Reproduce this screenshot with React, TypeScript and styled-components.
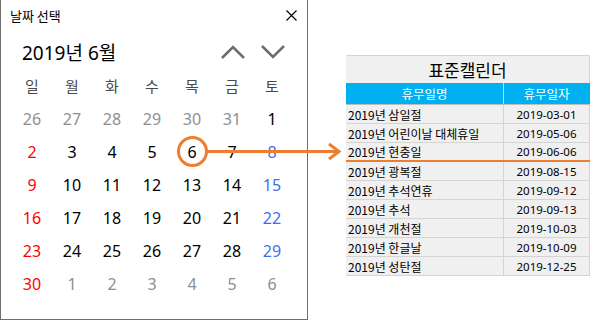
import React from 'react'
import styled, { createGlobalStyle } from 'styled-components'

const GlobalStyle = createGlobalStyle`
  html, body {
    margin: 0;
    padding: 0;
    background: #ffffff;
  }
  body {
    font-family: "Noto Sans", "Noto Sans CJK KR", sans-serif;
  }
`

const ORANGE = '#ed7d31'

const Page = styled.div`
  position: relative;
  width: 600px;
  height: 329px;
  display: flex;
  align-items: flex-start;
  overflow: hidden;
  background: #fff;
`

const Dialog = styled.div`
  width: 308px;
  height: 320px;
  box-sizing: border-box;
  border: 1px solid #6e6e6e;
  border-top: none;
  background: #fff;
  display: flex;
  flex-direction: column;
`

const TitleBar = styled.div`
  height: 31px;
  display: flex;
  align-items: center;
  justify-content: space-between;
  padding: 0 9px 0 9px;
  font-size: 13px;
  color: #000;
  font-family: "Noto Sans CJK KR", sans-serif;
`

const CloseButton = styled.span`
  display: flex;
  align-items: center;
  justify-content: center;
  width: 14px;
  height: 14px;
`

const MonthHeader = styled.div`
  height: 38px;
  display: flex;
  align-items: center;
  padding: 0 22px 0 21px;
  box-sizing: border-box;
`

const MonthLabel = styled.div`
  flex: 1;
  font-size: 19px;
  color: #000;
  font-family: "Noto Sans", "Noto Sans CJK KR", sans-serif;
  padding-top: 4px;
`

const NavButtons = styled.div`
  display: flex;
  gap: 16px;
  padding-top: 4px;
`

const DayGrid = styled.div`
  display: grid;
  grid-template-columns: repeat(7, 40px);
  grid-auto-rows: 33px;
  padding-left: 11px;
`

const WeekdayCell = styled.div`
  display: flex;
  align-items: center;
  justify-content: center;
  font-size: 15px;
  color: #4a4a4a;
  font-family: "Noto Sans CJK KR", sans-serif;
`

type Tone = 'other' | 'sun' | 'sat' | 'normal'

const toneColor: Record<Tone, string> = {
  other: '#8f8f8f',
  sun: '#ff0000',
  sat: '#3f6df5',
  normal: '#000000',
}

const DayCell = styled.div<{ $tone: Tone }>`
  display: flex;
  align-items: center;
  justify-content: center;
  font-size: 16px;
  color: ${(p) => toneColor[p.$tone]};
`

const Sheet = styled.div`
  margin-left: 38px;
  margin-top: 55px;
  width: 244px;
  display: flex;
  flex-direction: column;
  font-family: "Noto Sans CJK KR", sans-serif;
`

const SheetTitle = styled.div`
  height: 28px;
  box-sizing: border-box;
  border-top: 1px solid #d4d4d4;
  border-right: 1px solid #d4d4d4;
  background: #f0f0f0;
  display: flex;
  align-items: center;
  justify-content: center;
  font-size: 17px;
  color: #000;
`

const SheetRow = styled.div<{ $marked?: boolean }>`
  display: grid;
  grid-template-columns: 158px 86px;
  height: 19px;
  box-sizing: border-box;
  border-bottom: ${(p) => (p.$marked ? `2px solid ${ORANGE}` : '1px solid #d4d4d4')};
  background: #f0f0f0;
`

const HeadRow = styled(SheetRow)`
  height: 22px;
  background: #00b0f0;
  border-bottom: 1px solid #bdbdbd;
`

const HeadCell = styled.div<{ $last?: boolean }>`
  display: flex;
  align-items: center;
  justify-content: center;
  color: #fff;
  font-size: 12.5px;
  border-right: 1px solid ${(p) => (p.$last ? '#00b0f0' : '#d4d4d4')};
`

const NameCell = styled.div`
  display: flex;
  align-items: center;
  padding-left: 2px;
  font-size: 12px;
  color: #000;
  border-right: 1px solid #d4d4d4;
  white-space: nowrap;
`

const DateCell = styled.div`
  display: flex;
  align-items: center;
  justify-content: center;
  font-size: 11.5px;
  color: #000;
  font-family: "Noto Sans", sans-serif;
  border-right: 1px solid #d4d4d4;
`

const Annotation = styled.svg`
  position: absolute;
  left: 0;
  top: 0;
  pointer-events: none;
`

const weekdays = ['일', '월', '화', '수', '목', '금', '토']

const days: number[] = [
  26, 27, 28, 29, 30, 31, 1,
  2, 3, 4, 5, 6, 7, 8,
  9, 10, 11, 12, 13, 14, 15,
  16, 17, 18, 19, 20, 21, 22,
  23, 24, 25, 26, 27, 28, 29,
  30, 1, 2, 3, 4, 5, 6,
]

const holidays = [
  { name: '2019년 삼일절', date: '2019-03-01' },
  { name: '2019년 어린이날 대체휴일', date: '2019-05-06' },
  { name: '2019년 현충일', date: '2019-06-06' },
  { name: '2019년 광복절', date: '2019-08-15' },
  { name: '2019년 추석연휴', date: '2019-09-12' },
  { name: '2019년 추석', date: '2019-09-13' },
  { name: '2019년 개천절', date: '2019-10-03' },
  { name: '2019년 한글날', date: '2019-10-09' },
  { name: '2019년 성탄절', date: '2019-12-25' },
]

// the first row's Saturday (June 1) is shown plain black in the source picture
function toneFor(i: number): Tone {
  if (i < 6 || i > 35) return 'other'
  if (i === 6) return 'normal'
  if (i % 7 === 0) return 'sun'
  if (i % 7 === 6) return 'sat'
  return 'normal'
}

function Chevron({ up }: { up?: boolean }) {
  return (
    <svg width="24" height="14" viewBox="0 0 24 14">
      <polyline
        points={up ? '1,13 12,2 23,13' : '1,1 12,12 23,1'}
        fill="none"
        stroke="#6e6e6e"
        strokeWidth="2.6"
      />
    </svg>
  )
}

export default function App() {
  return (
    <Page>
      <GlobalStyle />
      <Dialog>
        <TitleBar>
          <span>날짜 선택</span>
          <CloseButton>
            <svg width="11" height="11" viewBox="0 0 11 11">
              <path d="M0.5 0.5 L10.5 10.5 M10.5 0.5 L0.5 10.5" stroke="#000" strokeWidth="1.2" />
            </svg>
          </CloseButton>
        </TitleBar>
        <MonthHeader>
          <MonthLabel>2019년 6월</MonthLabel>
          <NavButtons>
            <Chevron up />
            <Chevron />
          </NavButtons>
        </MonthHeader>
        <DayGrid>
          {weekdays.map((w) => (
            <WeekdayCell key={w}>{w}</WeekdayCell>
          ))}
          {days.map((d, i) => (
            <DayCell key={i} $tone={toneFor(i)}>
              {d}
            </DayCell>
          ))}
        </DayGrid>
      </Dialog>

      <Sheet>
        <SheetTitle>표준캘린더</SheetTitle>
        <HeadRow>
          <HeadCell>휴무일명</HeadCell>
          <HeadCell $last>휴무일자</HeadCell>
        </HeadRow>
        {holidays.map((h) => (
          <SheetRow key={h.date} $marked={h.date === '2019-06-06'}>
            <NameCell>{h.name}</NameCell>
            <DateCell>{h.date}</DateCell>
          </SheetRow>
        ))}
      </Sheet>

      <Annotation width="600" height="329" viewBox="0 0 600 329">
        <circle cx="192.5" cy="151.5" r="14" fill="none" stroke={ORANGE} strokeWidth="3" />
        <line x1="206" y1="151.5" x2="338" y2="151.5" stroke={ORANGE} strokeWidth="3" />
        <polyline points="329,144 339,151.5 329,159" fill="none" stroke={ORANGE} strokeWidth="3" />
      </Annotation>
    </Page>
  )
}
